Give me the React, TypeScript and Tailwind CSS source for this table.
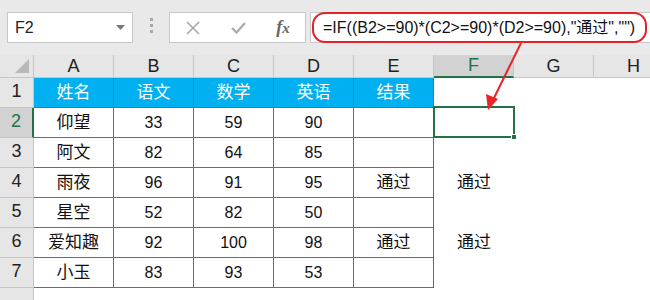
import React from "react";

type Row = { name: string; yw: string; sx: string; yy: string; result: string };

const rows: Row[] = [
    { name: "仰望", yw: "33", sx: "59", yy: "90", result: "" },
    { name: "阿文", yw: "82", sx: "64", yy: "85", result: "" },
    { name: "雨夜", yw: "96", sx: "91", yy: "95", result: "通过" },
    { name: "星空", yw: "52", sx: "82", yy: "50", result: "" },
    { name: "爱知趣", yw: "92", sx: "100", yy: "98", result: "通过" },
    { name: "小玉", yw: "83", sx: "93", yy: "53", result: "" },
];

const columns = ["A", "B", "C", "D", "E", "F", "G", "H"];

const font = "font-['Liberation_Sans','Noto_Sans_CJK_SC',sans-serif]";

function FormulaBar() {
    return (
        <div className="flex h-[55px] items-start bg-[#e9e9e9] pt-[12px]">
            {/* Name box */}
            <div className="ml-[7px] flex h-[31px] w-[126px] items-center justify-between border border-[#c8c8c8] bg-white pl-[7px] pr-[7px]">
                <span className="text-[16px] text-[#222]">F2</span>
                <svg width="9" height="5" viewBox="0 0 9 5">
                    <path d="M0 0 L9 0 L4.5 5 Z" fill="#777" />
                </svg>
            </div>
            {/* Grip */}
            <div className="ml-[17px] mt-[6px] flex flex-col gap-[3px]">
                <span className="h-[3px] w-[3px] bg-[#a8a8a8]" />
                <span className="h-[3px] w-[3px] bg-[#a8a8a8]" />
                <span className="h-[3px] w-[3px] bg-[#a8a8a8]" />
            </div>
            {/* Cancel / enter / fx */}
            <div className="ml-[16px] flex h-[31px] w-[137px] items-center border border-[#c8c8c8] bg-white">
                <div className="flex w-[46px] justify-center">
                    <svg width="14" height="14" viewBox="0 0 14 14">
                        <path d="M1 1 L13 13 M13 1 L1 13" stroke="#a9a9a9" strokeWidth="1.6" />
                    </svg>
                </div>
                <div className="flex w-[45px] justify-center">
                    <svg width="15" height="12" viewBox="0 0 15 12">
                        <path d="M1 6 L5.5 10.5 L14 1" stroke="#a9a9a9" strokeWidth="2.2" fill="none" />
                    </svg>
                </div>
                <div className="flex w-[44px] justify-center">
                    <span className="font-['Liberation_Serif',serif] text-[18px] font-bold italic text-[#666]">
                        f<span className="text-[15px]">x</span>
                    </span>
                </div>
            </div>
            {/* Formula input */}
            <div className="relative ml-[4px] flex h-[31px] flex-1 items-center border-y border-l border-[#c8c8c8] bg-white pl-[12px]">
                <span className="whitespace-nowrap text-[16px] text-[#111]">
                    =IF((B2&gt;=90)*(C2&gt;=90)*(D2&gt;=90),"通过","")
                </span>
                <div className="absolute left-[1px] right-[3px] top-[-1px] bottom-[-1px] rounded-[13px] border-2 border-[#e3212b]" />
            </div>
        </div>
    );
}

function ColumnHeaders() {
    return (
        <div className="flex h-[23px] bg-[#e6e6e6]">
            <div className="relative w-[34px] shrink-0 border-r border-b border-[#c6c6c6]">
                <svg className="absolute right-[4px] bottom-[4px]" width="14" height="14" viewBox="0 0 14 14">
                    <path d="M14 0 L14 14 L0 14 Z" fill="#b8b8b8" />
                </svg>
            </div>
            {columns.map((c) =>
                c === "F" ? (
                    <div
                        key={c}
                        className="flex w-[80px] shrink-0 items-center justify-center border-r border-b-2 border-r-[#c6c6c6] border-b-[#217346] bg-[#d2d2d2] text-[18px] text-[#217346]"
                    >
                        {c}
                    </div>
                ) : (
                    <div
                        key={c}
                        className="flex w-[80px] shrink-0 items-center justify-center border-r border-b border-[#c6c6c6] text-[18px] text-[#222]"
                    >
                        {c}
                    </div>
                )
            )}
        </div>
    );
}

function RowHeader({ n, active }: { n?: number; active?: boolean }) {
    if (active) {
        return (
            <div className="flex w-[34px] shrink-0 items-end justify-center border-r-2 border-b border-r-[#217346] border-b-[#c6c6c6] bg-[#d2d2d2] pb-[2px] text-[18px] text-[#217346]">
                {n}
            </div>
        );
    }
    return (
        <div className="flex w-[34px] shrink-0 items-end justify-center border-r border-b border-[#c6c6c6] bg-[#e6e6e6] pb-[2px] text-[18px] text-[#222]">
            {n}
        </div>
    );
}

function Cell({ children, head, cjk }: { children?: React.ReactNode; head?: boolean; cjk?: boolean }) {
    return (
        <div
            className={
                "flex w-[80px] shrink-0 items-center justify-center border-r border-b border-[#2a80b6] " +
                (cjk || head ? "text-[17px] " : "text-[16px] ") +
                (head ? "bg-[#00b0f0] text-white" : "bg-white text-[#111]")
            }
        >
            {children}
        </div>
    );
}

function Plain({ children }: { children?: React.ReactNode }) {
    return <div className="flex w-[80px] shrink-0 items-center justify-center text-[17px] text-[#111]">{children}</div>;
}

export default function App() {
    return (
        <div className={`relative h-[300px] w-[650px] overflow-hidden bg-white ${font}`}>
            <FormulaBar />
            <ColumnHeaders />

            {/* Row 1: table header */}
            <div className="flex h-[30px]">
                <RowHeader n={1} />
                <Cell head>姓名</Cell>
                <Cell head>语文</Cell>
                <Cell head>数学</Cell>
                <Cell head>英语</Cell>
                <Cell head>结果</Cell>
                <Plain />
                <Plain />
                <Plain />
            </div>

            {rows.map((r, i) => (
                <div key={r.name} className="flex h-[30px]">
                    <RowHeader n={i + 2} active={i === 0} />
                    <Cell cjk>{r.name}</Cell>
                    <Cell>{r.yw}</Cell>
                    <Cell>{r.sx}</Cell>
                    <Cell>{r.yy}</Cell>
                    <Cell cjk>{r.result}</Cell>
                    <Plain>{r.result}</Plain>
                    <Plain />
                    <Plain />
                </div>
            ))}

            {/* Row 8, only its header strip is on screen */}
            <div className="flex h-[30px]">
                <RowHeader />
            </div>

            {/* Selected cell F2 with fill handle */}
            <div className="absolute left-[433px] top-[106px] h-[32px] w-[82px] border-2 border-[#217346]">
                <div className="absolute right-[-4px] bottom-[-4px] h-[6px] w-[6px] border border-white bg-[#217346]" />
            </div>

            {/* Pointer arrow */}
            <svg className="absolute left-0 top-0" width="650" height="300" viewBox="0 0 650 300">
                <line x1="521" y1="43" x2="493" y2="100" stroke="#e8262a" strokeWidth="2" />
                <path d="M488 110 L486 94 L498 99 Z" fill="#e8262a" />
            </svg>
        </div>
    );
}
